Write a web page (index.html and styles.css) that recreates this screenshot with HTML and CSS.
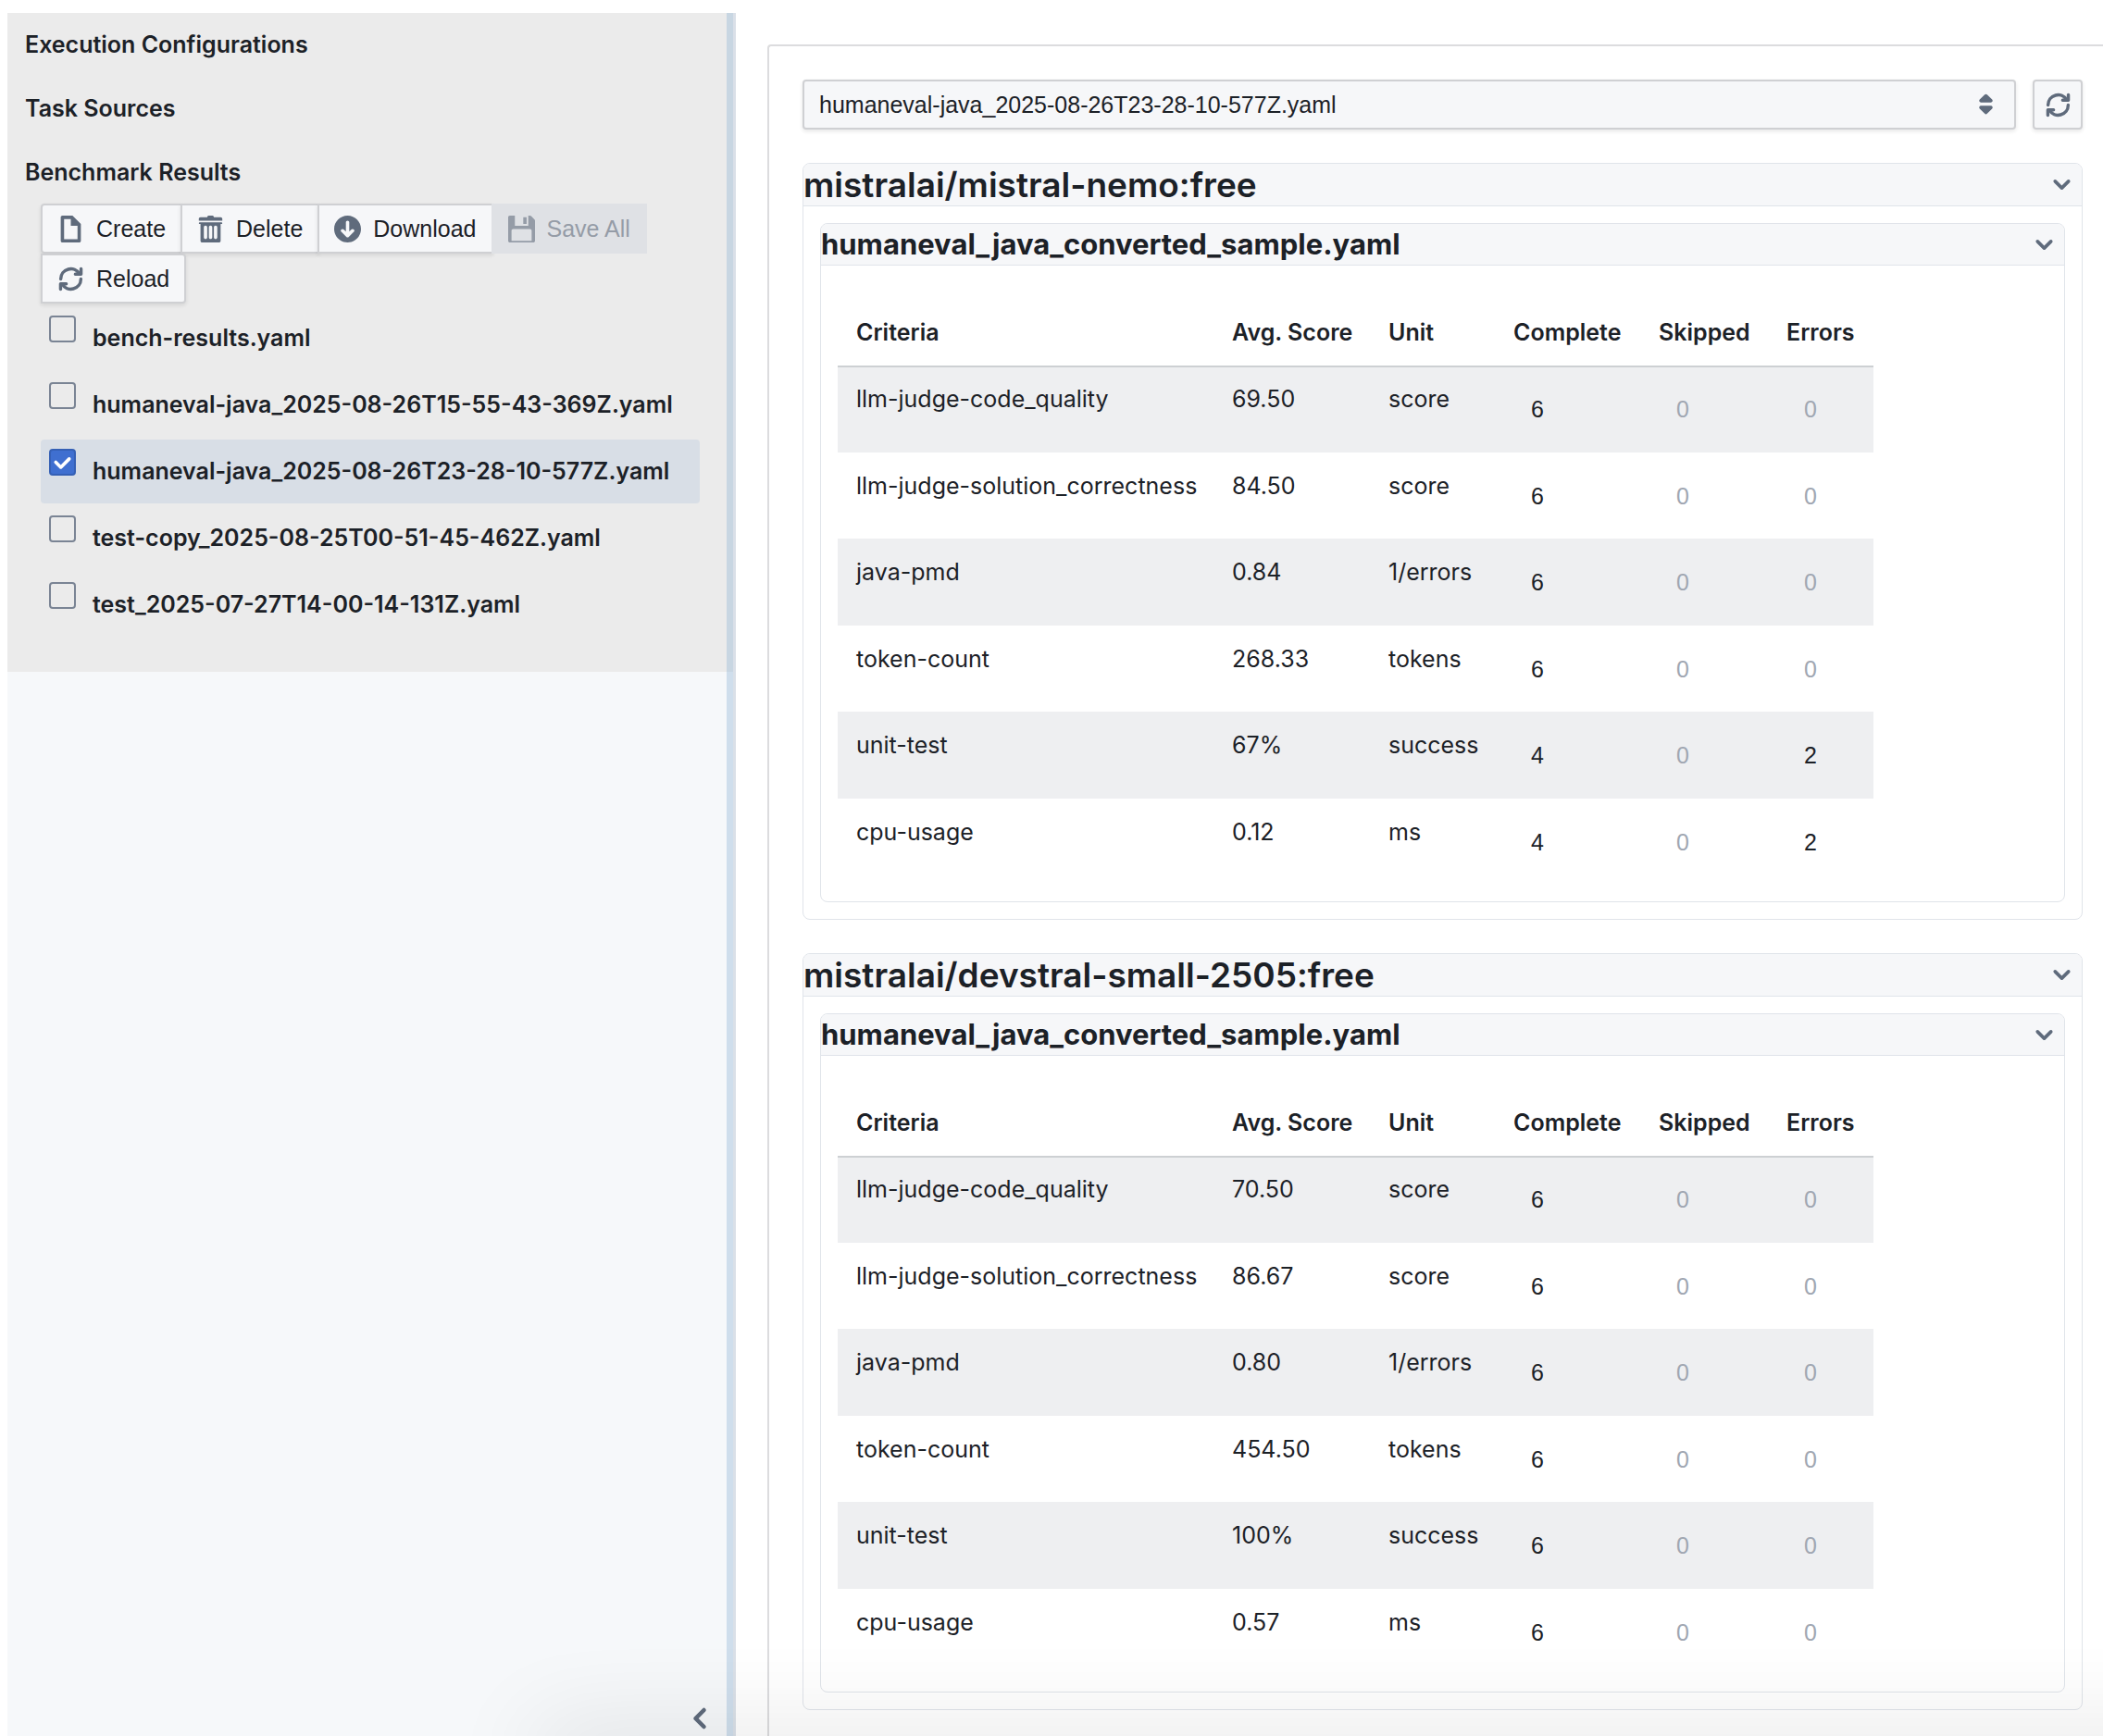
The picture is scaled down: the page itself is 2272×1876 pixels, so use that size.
FILE: index.html
```html
<!DOCTYPE html>
<html lang="en">
<head>
<meta charset="utf-8">
<title>Benchmark Results</title>
<link rel="stylesheet" href="styles.css">
</head>
<body>
<svg class="sprite" aria-hidden="true">
  <symbol id="i-document" viewBox="0 0 16 16"><path d="M9 0H3c-.55 0-1 .45-1 1v14c0 .55.45 1 1 1h10c.55 0 1-.45 1-1V5L9 0zm3 14H4V2h4v4h4v8z"/></symbol>
  <symbol id="i-trash" viewBox="0 0 16 16"><path d="M14.49 3.99h-13c-.28 0-.5.22-.5.5s.22.5.5.5h.5v10c0 .55.45 1 1 1h10c.55 0 1-.45 1-1v-10h.5c.28 0 .5-.22.5-.5s-.22-.5-.5-.5zm-8.5 9c0 .55-.45 1-1 1s-1-.45-1-1v-6c0-.55.45-1 1-1s1 .45 1 1v6zm3 0c0 .55-.45 1-1 1s-1-.45-1-1v-6c0-.55.45-1 1-1s1 .45 1 1v6zm3 0c0 .55-.45 1-1 1s-1-.45-1-1v-6c0-.55.45-1 1-1s1 .45 1 1v6zm2-12h-4c0-.55-.45-1-1-1h-2c-.55 0-1 .45-1 1h-4c-.55 0-1 .45-1 1v1h14v-1c0-.55-.45-1-1-1z"/></symbol>
  <symbol id="i-download" viewBox="0 0 16 16"><path d="M8 0C3.58 0 0 3.58 0 8s3.58 8 8 8 8-3.58 8-8-3.58-8-8-8zm3.71 9.71l-3 3c-.18.18-.43.29-.71.29s-.53-.11-.71-.29l-3-3a1.003 1.003 0 011.42-1.42L7 9.58V4c0-.55.45-1 1-1s1 .45 1 1v5.58l1.29-1.29a1.003 1.003 0 011.42 1.42z"/></symbol>
  <symbol id="i-floppy" viewBox="0 0 16 16"><path d="M15.71 2.29l-2-2A.997.997 0 0013 0h-1v6H4V0H1C.45 0 0 .45 0 1v14c0 .55.45 1 1 1h14c.55 0 1-.45 1-1V3c0-.28-.11-.53-.29-.71zM14 15H2V9c0-.55.45-1 1-1h10c.55 0 1 .45 1 1v6zM11 1H9v4h2V1z"/></symbol>
  <symbol id="i-refresh" viewBox="0 0 16 16"><g fill="none" stroke="currentColor" stroke-width="1.9" stroke-linecap="round" stroke-linejoin="round"><path d="M2 8a6 6 0 0 1 11.2-3M14 8a6 6 0 0 1-11.2 3"/><path d="M14.1 1.9v3.2h-3.4M1.9 14.1v-3.2h3.4"/></g></symbol>
  <symbol id="i-caret" viewBox="0 0 16 16"><path d="M5 7h6a1.003 1.003 0 00.71-1.71l-3-3C8.53 2.11 8.28 2 8 2s-.53.11-.71.29l-3 3A1.003 1.003 0 005 7zm6 2H5a1.003 1.003 0 00-.71 1.71l3 3c.18.18.43.29.71.29s.53-.11.71-.29l3-3A1.003 1.003 0 0011 9z"/></symbol>
  <symbol id="i-down" viewBox="0 0 16 16"><path d="M12 5c-.28 0-.53.11-.71.29L8 8.59l-3.29-3.3a1.003 1.003 0 00-1.42 1.42l4 4c.18.18.43.29.71.29s.53-.11.71-.29l4-4A1.003 1.003 0 0012 5z"/></symbol>
  <symbol id="i-left" viewBox="0 0 16 16"><path d="M7.41 8l3.3-3.29a1.003 1.003 0 00-1.42-1.42l-4 4C5.11 7.47 5 7.72 5 8s.11.53.29.71l4 4a1.003 1.003 0 001.42-1.42z"/></symbol>
</svg>

<div class="app">
  <aside class="sidebar">
    <nav class="menu">
      <h2 class="menu-title">Execution Configurations</h2>
      <h2 class="menu-title">Task Sources</h2>
      <h2 class="menu-title">Benchmark Results</h2>
      <div class="toolbar">
        <button class="btn first" type="button"><svg class="icon"><use href="#i-document"/></svg>Create</button>
        <button class="btn" type="button"><svg class="icon"><use href="#i-trash"/></svg>Delete</button>
        <button class="btn" type="button"><svg class="icon"><use href="#i-download"/></svg>Download</button>
        <button class="btn" type="button" disabled><svg class="icon"><use href="#i-floppy"/></svg>Save All</button>
        <button class="btn last" type="button"><svg class="icon"><use href="#i-refresh"/></svg>Reload</button>
      </div>
      <ul class="files">
        <li><label class="file"><input class="check" type="checkbox"><span>bench-results.yaml</span></label></li>
        <li><label class="file"><input class="check" type="checkbox"><span>humaneval-java_2025-08-26T15-55-43-369Z.yaml</span></label></li>
        <li><label class="file selected"><input class="check" type="checkbox" checked><span>humaneval-java_2025-08-26T23-28-10-577Z.yaml</span></label></li>
        <li><label class="file"><input class="check" type="checkbox"><span>test-copy_2025-08-25T00-51-45-462Z.yaml</span></label></li>
        <li><label class="file"><input class="check" type="checkbox"><span>test_2025-07-27T14-00-14-131Z.yaml</span></label></li>
      </ul>
    </nav>
    <button class="collapse" type="button" aria-label="Collapse sidebar"><svg class="icon large"><use href="#i-left"/></svg></button>
    <div class="resizer"></div>
  </aside>

  <main class="main">
    <div class="panel">
      <div class="picker">
        <div class="select">
          <select aria-label="Result file"><option>humaneval-java_2025-08-26T23-28-10-577Z.yaml</option></select>
          <svg class="icon"><use href="#i-caret"/></svg>
        </div>
        <button class="btn square" type="button" aria-label="Refresh"><svg class="icon"><use href="#i-refresh"/></svg></button>
      </div>

      <section class="section">
        <header class="section-head">
          <h2 class="model">mistralai/mistral-nemo:free</h2>
          <button class="toggle" type="button" aria-label="Toggle model"><svg class="icon"><use href="#i-down"/></svg></button>
        </header>
        <div class="section-body">
          <section class="section">
            <header class="section-head">
              <h3 class="source">humaneval_java_converted_sample.yaml</h3>
              <button class="toggle" type="button" aria-label="Toggle source"><svg class="icon"><use href="#i-down"/></svg></button>
            </header>
            <div class="section-body">
              <table class="results">
                <colgroup><col class="c-criteria"><col class="c-score"><col class="c-unit"><col class="c-complete"><col class="c-skipped"><col class="c-errors"></colgroup>
                <thead><tr><th>Criteria</th><th>Avg. Score</th><th>Unit</th><th>Complete</th><th>Skipped</th><th>Errors</th></tr></thead>
                <tbody>
                  <tr><td>llm-judge-code_quality</td><td>69.50</td><td>score</td><td><button class="count">6</button></td><td><button class="count" disabled>0</button></td><td><button class="count" disabled>0</button></td></tr>
                  <tr><td>llm-judge-solution_correctness</td><td>84.50</td><td>score</td><td><button class="count">6</button></td><td><button class="count" disabled>0</button></td><td><button class="count" disabled>0</button></td></tr>
                  <tr><td>java-pmd</td><td>0.84</td><td>1/errors</td><td><button class="count">6</button></td><td><button class="count" disabled>0</button></td><td><button class="count" disabled>0</button></td></tr>
                  <tr><td>token-count</td><td>268.33</td><td>tokens</td><td><button class="count">6</button></td><td><button class="count" disabled>0</button></td><td><button class="count" disabled>0</button></td></tr>
                  <tr><td>unit-test</td><td>67%</td><td>success</td><td><button class="count">4</button></td><td><button class="count" disabled>0</button></td><td><button class="count">2</button></td></tr>
                  <tr><td>cpu-usage</td><td>0.12</td><td>ms</td><td><button class="count">4</button></td><td><button class="count" disabled>0</button></td><td><button class="count">2</button></td></tr>
                </tbody>
              </table>
            </div>
          </section>
        </div>
      </section>

      <section class="section">
        <header class="section-head">
          <h2 class="model">mistralai/devstral-small-2505:free</h2>
          <button class="toggle" type="button" aria-label="Toggle model"><svg class="icon"><use href="#i-down"/></svg></button>
        </header>
        <div class="section-body">
          <section class="section">
            <header class="section-head">
              <h3 class="source">humaneval_java_converted_sample.yaml</h3>
              <button class="toggle" type="button" aria-label="Toggle source"><svg class="icon"><use href="#i-down"/></svg></button>
            </header>
            <div class="section-body">
              <table class="results">
                <colgroup><col class="c-criteria"><col class="c-score"><col class="c-unit"><col class="c-complete"><col class="c-skipped"><col class="c-errors"></colgroup>
                <thead><tr><th>Criteria</th><th>Avg. Score</th><th>Unit</th><th>Complete</th><th>Skipped</th><th>Errors</th></tr></thead>
                <tbody>
                  <tr><td>llm-judge-code_quality</td><td>70.50</td><td>score</td><td><button class="count">6</button></td><td><button class="count" disabled>0</button></td><td><button class="count" disabled>0</button></td></tr>
                  <tr><td>llm-judge-solution_correctness</td><td>86.67</td><td>score</td><td><button class="count">6</button></td><td><button class="count" disabled>0</button></td><td><button class="count" disabled>0</button></td></tr>
                  <tr><td>java-pmd</td><td>0.80</td><td>1/errors</td><td><button class="count">6</button></td><td><button class="count" disabled>0</button></td><td><button class="count" disabled>0</button></td></tr>
                  <tr><td>token-count</td><td>454.50</td><td>tokens</td><td><button class="count">6</button></td><td><button class="count" disabled>0</button></td><td><button class="count" disabled>0</button></td></tr>
                  <tr><td>unit-test</td><td>100%</td><td>success</td><td><button class="count">6</button></td><td><button class="count" disabled>0</button></td><td><button class="count" disabled>0</button></td></tr>
                  <tr><td>cpu-usage</td><td>0.57</td><td>ms</td><td><button class="count">6</button></td><td><button class="count" disabled>0</button></td><td><button class="count" disabled>0</button></td></tr>
                </tbody>
              </table>
            </div>
          </section>
        </div>
      </section>
    </div>
  </main>
</div>
<div class="bottom-shade"></div>
</body>
</html>
```

FILE: styles.css
```css
* { box-sizing: border-box; }

body {
  margin: 0;
  background: #fff;
  color: #1c2127;
  font-family: Inter, "Noto Sans", sans-serif;
  font-size: 25px;
  line-height: 32px;
}

h2, h3, ul { margin: 0; padding: 0; }
ul { list-style: none; }

button, select {
  margin: 0;
  color: inherit;
  font-family: "Liberation Sans", Arial, sans-serif;
  font-size: 25px;
  line-height: 32px;
}

.sprite { display: none; }

.icon {
  display: block;
  flex: none;
  width: 29px;
  height: 29px;
  color: #5f6b7c;
  fill: currentColor;
}
.icon.large { width: 36px; height: 36px; }

.app {
  display: flex;
  min-height: 100vh;
  padding: 14px 0 0 8px;
}

/* Sidebar */
.sidebar {
  position: relative;
  display: flex;
  flex-direction: column;
  justify-content: space-between;
  flex: none;
  width: 787px;
  background: #f6f8fa;
}

.menu {
  padding-bottom: 35px;
  background: #ebebeb;
}

.menu-title {
  padding: 18px 19px 19px;
  font-size: 25px;
  font-weight: 600;
}

.toolbar {
  display: flex;
  flex-wrap: wrap;
  margin: -1px 39px 0 36px;
}

.btn {
  display: flex;
  align-items: center;
  gap: 13px;
  height: 54px;
  padding: 0 18px;
  border: 0;
  background: #f6f7f9;
  box-shadow: inset 0 0 0 2px rgba(17, 20, 24, .17), 0 2px 4px rgba(17, 20, 24, .1);
}
.toolbar .btn:not(.last) { margin-right: -2px; }
.btn.first { border-radius: 4px 0 0 4px; }
.btn.last { border-radius: 0 4px 4px 0; }
.btn:disabled {
  background: #dfe1e5;
  box-shadow: none;
  color: #959ca7;
}
.btn:disabled .icon { color: #959ca7; }
.btn.square {
  justify-content: center;
  flex: none;
  width: 54px;
  padding: 0;
  border-radius: 4px;
}

.files { margin: 3px 39px 0 36px; }

.file {
  display: flex;
  gap: 18px;
  height: 69px;
  margin-bottom: 3px;
  padding: 10px 9px;
  border-radius: 4px;
  font-weight: 600;
  white-space: nowrap;
}
.file span { padding-top: 8px; }
.file.selected { background: #d8dee6; }

.check {
  appearance: none;
  flex: none;
  width: 29px;
  height: 29px;
  margin: 0;
  border: 2px solid #7a8494;
  border-radius: 4px;
}
.check:checked {
  border-color: #3560b5;
  background: #3f6fd0 url("data:image/svg+xml,%3Csvg xmlns='http://www.w3.org/2000/svg' viewBox='0 0 16 16' fill='white'%3E%3Cpath d='M12 5c-.28 0-.53.11-.71.29L7 9.59l-2.29-2.3a1.003 1.003 0 00-1.42 1.42l3 3c.18.18.43.29.71.29s.53-.11.71-.29l5-5A1.003 1.003 0 0012 5z'/%3E%3C/svg%3E") center / 29px no-repeat;
}

.collapse {
  align-self: flex-end;
  margin: 0 21px 1px 0;
  padding: 0;
  border: 0;
  background: none;
}

.resizer {
  position: absolute;
  inset: 0 0 0 auto;
  width: 10px;
  border-right: 3px solid #dae0e8;
  background: rgba(138, 177, 212, .36);
  background-clip: padding-box;
  cursor: col-resize;
}

/* Results */
.main {
  flex: 1;
  min-width: 0;
  padding: 34px 0 0 34px;
}

.panel {
  height: 100%;
  padding: 36px 22px 28px 36px;
  border: 2px solid #dcdcde;
  border-width: 2px 0 0 2px;
  border-radius: 4px 0 0 0;
}

.picker {
  display: flex;
  gap: 18px;
}

.select {
  position: relative;
  flex: 1;
}
.select select {
  appearance: none;
  display: block;
  width: 100%;
  height: 54px;
  padding: 0 54px 0 18px;
  border: 0;
  border-radius: 4px;
  background: #f6f7f9;
  box-shadow: inset 0 0 0 2px rgba(17, 20, 24, .17), 0 2px 4px rgba(17, 20, 24, .1);
}
.select .icon {
  position: absolute;
  top: 12px;
  right: 18px;
  pointer-events: none;
}

.section {
  border: 1px solid #e0e4ea;
  border-radius: 8px;
}
.panel > .section { margin-top: 36px; }

.section-head {
  display: flex;
  align-items: center;
  justify-content: space-between;
  height: 46px;
  padding-right: 7px;
  border-bottom: 1px solid #e0e4ea;
  border-radius: 7px 7px 0 0;
  background: #f6f7f9;
}
.section .section .section-head { height: 45px; }

.model { font-size: 37px; font-weight: 600; line-height: 44px; white-space: nowrap; }
.source { font-size: 31px; font-weight: 700; line-height: 44px; white-space: nowrap; }

.toggle {
  padding: 0;
  border: 0;
  background: none;
}

.section-body { padding: 18px; }
.section-body .section-body { padding: 36px 18px 18px; }

.results {
  table-layout: fixed;
  width: 1119px;
  border-collapse: collapse;
}
.c-criteria { width: 406px; }
.c-score { width: 169px; }
.c-unit { width: 135px; }
.c-complete { width: 157px; }
.c-skipped { width: 138px; }
.c-errors { width: 114px; }

.results th, .results td {
  padding: 20px 0 0 20px;
  text-align: left;
  vertical-align: top;
  white-space: nowrap;
}
.results th { height: 72px; font-weight: 600; }
.results tbody tr { height: 94px; }
.results tbody tr:nth-child(even) { height: 93px; }
.results tbody tr:nth-child(odd) { background: #eeeff1; }
.results tbody tr:first-child { box-shadow: inset 0 2px #cdd0d3; }

.count {
  display: block;
  height: 54px;
  padding: 0 19px;
  border: 0;
  background: none;
}
.count:disabled { color: #a0a7b2; }

/* Soft shade rising from the lower window edge */
.bottom-shade {
  position: fixed;
  right: -200px;
  bottom: -40px;
  left: 580px;
  height: 40px;
  box-shadow: 0 0 100px rgba(0, 0, 0, .16);
  pointer-events: none;
}
```
